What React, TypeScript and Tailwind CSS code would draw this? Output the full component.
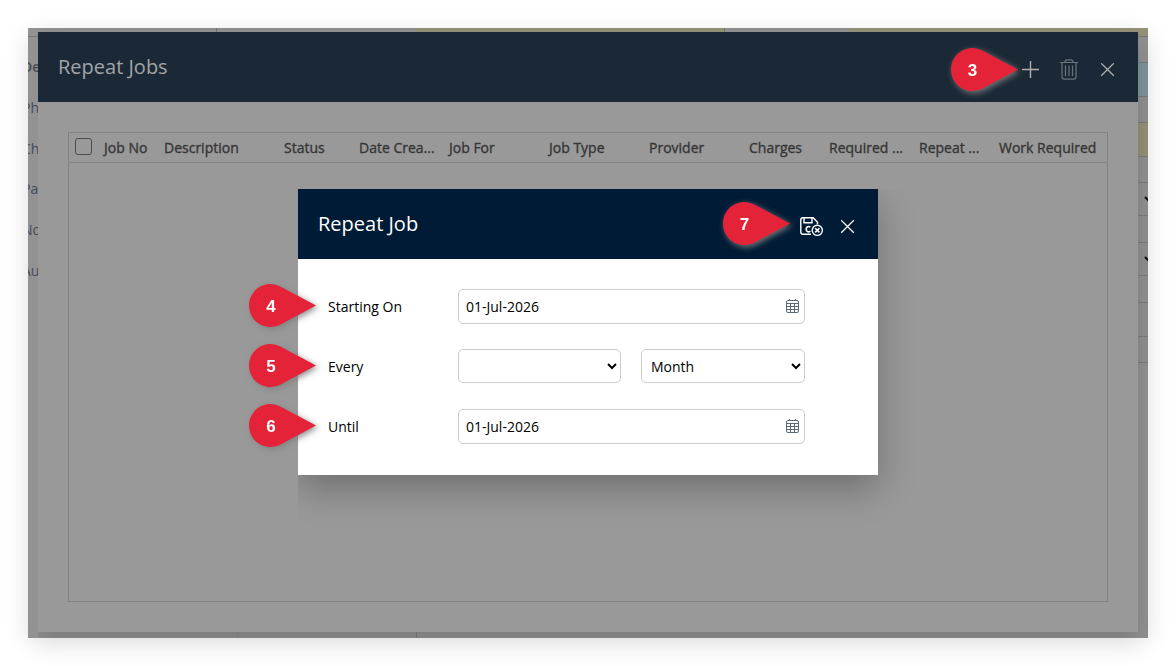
import React from 'react';
import clsx from 'clsx';

const columns = [
  { title: 'Job No', width: 'w-[60px]' },
  { title: 'Description', width: 'w-[120px]' },
  { title: 'Status', width: 'w-[75px]' },
  { title: 'Date Crea...', width: 'w-[90px]' },
  { title: 'Job For', width: 'w-[100px]' },
  { title: 'Job Type', width: 'w-[100px]' },
  { title: 'Provider', width: 'w-[100px]' },
  { title: 'Charges', width: 'w-[80px]' },
  { title: 'Required ...', width: 'w-[90px]' },
  { title: 'Repeat ...', width: 'w-[80px]' },
  { title: 'Work Required', width: 'w-[105px]' },
];

const fieldRows = [
  { height: 'h-[34px]', color: '' },
  { height: 'h-[34px]', color: 'bg-[#7e9599]' },
  { height: 'h-[26px]', color: '' },
  { height: 'h-[34px]', color: 'bg-[#959279]' },
  { height: 'h-[26px]', color: '' },
  { height: 'h-[33px]', color: '', arrow: true },
  { height: 'h-[27px]', color: '' },
  { height: 'h-[33px]', color: '', arrow: true },
  { height: 'h-[27px]', color: '' },
  { height: 'h-[34px]', color: '' },
  { height: 'h-[26px]', color: '' },
];

const CloseIcon = () => (
  <svg width="14" height="14" viewBox="0 0 14 14" fill="none" stroke="currentColor" strokeWidth="1.3">
    <path d="M.2.3l12.6 12.4M12.8.3L.2 12.7" />
  </svg>
);

const PlusIcon = () => (
  <svg width="17" height="17" viewBox="0 0 17 17" fill="none" stroke="currentColor" strokeWidth="1.4">
    <path d="M8.5 0v17M0 8.5h17" />
  </svg>
);

const TrashIcon = () => (
  <svg width="18" height="21" viewBox="0 0 18 21" fill="none" stroke="currentColor" strokeWidth="1.2">
    <path d="M0 3.5h18M4.8 3.5c.3-1.8 1-2.7 2.4-2.7h3.6c1.4 0 2.1.9 2.4 2.7M2 3.5v14.2c0 1.5.8 2.4 2.3 2.4h9.4c1.5 0 2.3-.9 2.3-2.4V3.5M5.5 6.5V17M9 6.5V17M12.5 6.5V17" />
  </svg>
);

const SaveCloseIcon = () => (
  <svg width="24" height="20" viewBox="0 0 24 20" fill="none" stroke="currentColor" strokeWidth="1.4">
    <path d="M11 17.2H3C1.6 17.2.8 16.4.8 15V3C.8 1.6 1.6.8 3 .8h10.2l4.3 4.4v2" />
    <path d="M4 1v4.7h8V1" />
    <path d="M10.4 10.2c-2-1.5-4.2-.3-4.2 2s2.2 3.5 4.2 2" strokeWidth="1.6" />
    <circle cx="17.3" cy="13.3" r="5.1" />
    <path d="M15.2 11.2l4.2 4.2M19.4 11.2l-4.2 4.2" strokeWidth="1.6" />
  </svg>
);

const CalendarIcon = () => (
  <svg width="13" height="15" viewBox="0 0 13 15" fill="none" stroke="#5c6874" strokeWidth="1">
    <rect x=".5" y="1.5" width="12" height="12" rx="1.5" />
    <path d="M.5 4.5h12M.5 7.5h12M.5 10.5h12M4.5 4.5v9M8.5 4.5v9M3.5 0v2M9.5 0v2" />
  </svg>
);

const Pin = ({ label, className }: { label: string; className: string }) => (
  <div className={clsx('absolute z-20 h-[43px] w-[67px] drop-shadow-[2px_2px_3px_rgba(128,128,128,0.9)]', className)}>
    <svg className="absolute inset-0" width="67" height="43" viewBox="0 0 67 43">
      <path
        fill="#e42338"
        d="M0 21.5C0 9.5 9.6 0 21.5 0 27 0 32 2.5 37 5.5L67 21.5 37 37.5C32 40.5 27 43 21.5 43 9.6 43 0 33.5 0 21.5z"
      />
    </svg>
    <span className="relative block w-[43px] text-center font-['Liberation_Sans',sans-serif] text-[17px] leading-[45px] font-bold text-white">
      {label}
    </span>
  </div>
);

const DateField = ({ value }: { value: string }) => (
  <div className="flex h-[35px] w-[347px] items-center justify-between rounded-[5px] border border-[#ccc] bg-white pr-[5.5px] pl-[7px]">
    <span>{value}</span>
    <CalendarIcon />
  </div>
);

const selectClass = 'h-[34px] rounded-[5px] border border-[#ccc] bg-white pl-[5px] text-sm text-black';

const Backdrop = () => (
  <div className="absolute inset-0 overflow-hidden bg-[#929292] text-sm text-[#454b57]">
    <div className="flex h-[9px]">
      <div className="w-[189px] border-r border-b border-[#777]" />
      <div className="w-[21px] border-r border-[#909090]" />
      <div className="w-[178px]" />
      <div className="w-[309px] border-r border-b border-[#777] bg-[#959279]" />
      <div className="w-[124px]" />
      <div className="flex-1 border-b border-[#777] bg-[#959279]" />
    </div>
    <div className="flex justify-between">
      <div className="-ml-[6px] flex flex-col pt-[10px] leading-[40.8px]">
        <span className="font-semibold">De</span>
        <span>Ph</span>
        <span>Ch</span>
        <span>Pa</span>
        <span>No</span>
        <span>Au</span>
      </div>
      <div className="flex w-[10px] flex-col bg-[#919191]">
        {fieldRows.map((row, i) => (
          <div key={i} className={clsx('flex shrink-0 items-center overflow-hidden border-b border-[#7c7c7c] pl-[6px]', row.height, row.color, i === 0 && '-mt-[8px]')}>
            {row.arrow && (
              <svg className="shrink-0" width="10" height="6" viewBox="0 0 10 6" fill="none" stroke="#111" strokeWidth="2">
                <path d="M1 1l4 4 4-4" />
              </svg>
            )}
          </div>
        ))}
      </div>
    </div>
    <div className="absolute bottom-0 left-[209px] h-[6px] w-[180px] border-r border-l border-r-[#7c7c7c] border-l-[#8c8c8c]" />
  </div>
);

const RepeatJobDialog = () => (
  <div className="absolute top-[161px] left-[270px] z-10 h-[286px] w-[580px] bg-white text-sm text-black shadow-[0_14px_34px_rgba(0,0,0,0.27)] [clip-path:inset(0_-60px_-70px_0)]">
    <div className="flex h-[70px] items-center bg-[#001b36] px-5 text-white">
      <h2 className="flex-1 text-xl">Repeat Job</h2>
      <div className="mt-[5px] flex items-center gap-[17px] pr-[3px]">
        <SaveCloseIcon />
        <CloseIcon />
      </div>
    </div>
    <div className="flex flex-col gap-[25px] px-[30px] pt-[30px]">
      <div className="flex items-center">
        <label className="w-[130px]">Starting On</label>
        <DateField value="01-Jul-2026" />
      </div>
      <div className="flex h-[35px] items-start">
        <label className="w-[130px] leading-[35px]">Every</label>
        <select className={clsx(selectClass, 'mr-5 w-[163px]')} defaultValue="">
          <option value=""></option>
        </select>
        <select className={clsx(selectClass, 'w-[164px]')} defaultValue="Month">
          <option>Month</option>
        </select>
      </div>
      <div className="flex items-center">
        <label className="w-[130px]">Until</label>
        <DateField value="01-Jul-2026" />
      </div>
    </div>
  </div>
);

const App: React.FC = () => {
  return (
    <div className="h-[666px] w-[1176px] overflow-hidden bg-white p-7 font-['Open_Sans',sans-serif]">
      <div className="relative h-[610px] w-[1120px] px-[10px] pt-[4px] shadow-[0_6px_24px_-3px_rgba(0,0,0,0.17)]">
        <Backdrop />

        {/* Repeat Jobs window, dimmed */}
        <div className="relative flex h-[600px] flex-col bg-[#999] shadow-[0_10px_24px_rgba(0,0,0,0.17)] [clip-path:inset(-4px_-10px_-6px_0)]">
          <div className="flex h-[70px] shrink-0 items-center justify-between bg-[#1b2936] px-5 text-[#a1a4a8]">
            <h1 className="text-xl">Repeat Jobs</h1>
            <div className="mt-[5px] flex items-center pr-[3px] text-[#b0b0b0]">
              <PlusIcon />
              <span className="mr-[23px] ml-[21px] text-[#6a727a]">
                <TrashIcon />
              </span>
              <CloseIcon />
            </div>
          </div>
          <div className="flex-1 p-[30px]">
            <div className="h-full border border-[#828282]">
              <div className="flex h-[30px] items-center border-b border-[#828282] pl-[6px] text-sm text-[#363636] [-webkit-text-stroke:0.35px_#363636]">
                <span className="-mt-[2px] mr-[12px] h-[17px] w-[17px] shrink-0 rounded-[3px] border border-[#4c4c4c]" />
                {columns.map((col) => (
                  <span key={col.title} className={clsx('shrink-0 whitespace-nowrap', col.width)}>
                    {col.title}
                  </span>
                ))}
              </div>
            </div>
          </div>
        </div>

        <RepeatJobDialog />

        <Pin label="3" className="top-[20px] left-[923px]" />
        <Pin label="7" className="top-[174px] left-[695px]" />
        <Pin label="4" className="top-[256px] left-[221.4px]" />
        <Pin label="5" className="top-[316px] left-[221.4px]" />
        <Pin label="6" className="top-[376px] left-[221.4px]" />
      </div>
    </div>
  );
};

export default App;
